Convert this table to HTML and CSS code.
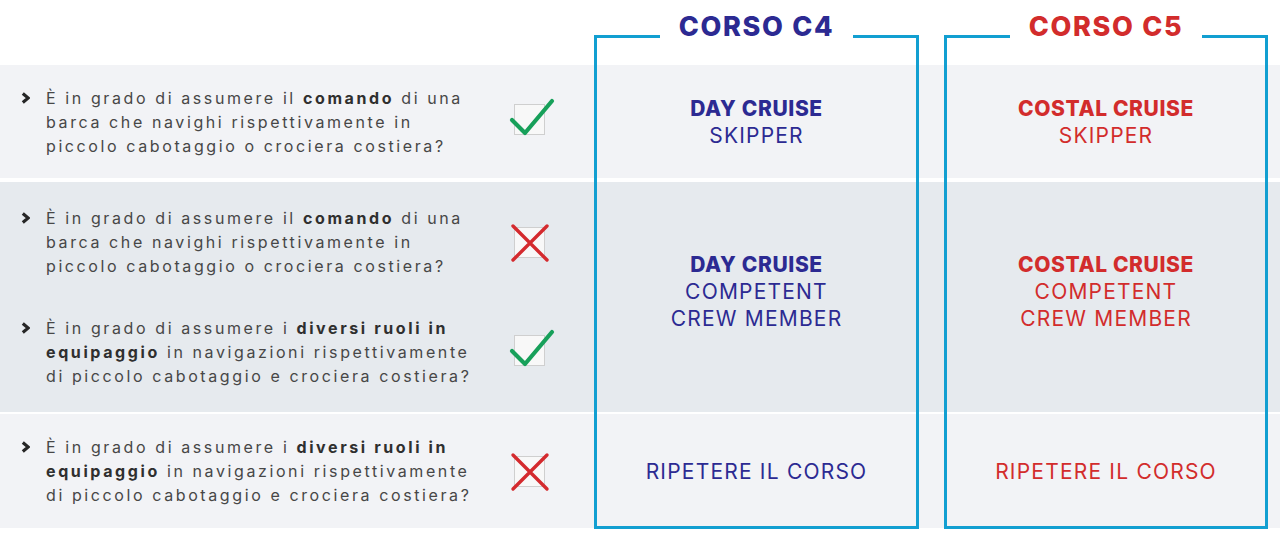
FILE: index.html
```html
<!DOCTYPE html>
<html lang="it">
<head>
<meta charset="utf-8">
<title>Corso C4 / C5</title>
<link rel="stylesheet" href="styles.css">
</head>
<body>
<div class="table">
  <div class="bg bg-r1"></div>
  <div class="bg bg-r2"></div>
  <div class="bg bg-r3"></div>

  <div class="box box-c4">
    <div class="box-head"><span class="seg"></span><h2 class="title navy">CORSO C4</h2><span class="seg"></span></div>
  </div>
  <div class="box box-c5">
    <div class="box-head"><span class="seg"></span><h2 class="title red">CORSO C5</h2><span class="seg"></span></div>
  </div>

  <div class="qcell r1">
    <div class="q">
      <svg class="arrow" viewBox="0 0 9 12" width="9" height="12"><path d="M1.8 1.5 L7.2 6 L1.8 10.5" fill="none" stroke="#262626" stroke-width="3.2"/></svg>
      <p class="qtext">È in grado di assumere il <b>comando</b> di una<br>barca che navighi rispettivamente in<br>piccolo cabotaggio o crociera costiera?</p>
      <span class="mark"><span class="cbox"></span><svg class="sym" viewBox="0 0 46 46" width="46" height="46"><path d="M3 24 L16 37 L43 5" fill="none" stroke="#17a05a" stroke-width="4.2" stroke-linecap="round" stroke-linejoin="round"/></svg></span>
    </div>
  </div>

  <div class="qcell r2">
    <div class="q">
      <svg class="arrow" viewBox="0 0 9 12" width="9" height="12"><path d="M1.8 1.5 L7.2 6 L1.8 10.5" fill="none" stroke="#262626" stroke-width="3.2"/></svg>
      <p class="qtext">È in grado di assumere il <b>comando</b> di una<br>barca che navighi rispettivamente in<br>piccolo cabotaggio o crociera costiera?</p>
      <span class="mark"><span class="cbox"></span><svg class="sym" viewBox="0 0 44 44" width="44" height="44"><path d="M5 5 L39 39 M39 5 L5 39" fill="none" stroke="#d42a2e" stroke-width="3.4" stroke-linecap="round"/></svg></span>
    </div>
    <div class="q">
      <svg class="arrow" viewBox="0 0 9 12" width="9" height="12"><path d="M1.8 1.5 L7.2 6 L1.8 10.5" fill="none" stroke="#262626" stroke-width="3.2"/></svg>
      <p class="qtext">È in grado di assumere i <b>diversi ruoli in</b><br><b>equipaggio</b> in navigazioni rispettivamente<br>di piccolo cabotaggio e crociera costiera?</p>
      <span class="mark"><span class="cbox"></span><svg class="sym" viewBox="0 0 46 46" width="46" height="46"><path d="M3 24 L16 37 L43 5" fill="none" stroke="#17a05a" stroke-width="4.2" stroke-linecap="round" stroke-linejoin="round"/></svg></span>
    </div>
  </div>

  <div class="qcell r3">
    <div class="q">
      <svg class="arrow" viewBox="0 0 9 12" width="9" height="12"><path d="M1.8 1.5 L7.2 6 L1.8 10.5" fill="none" stroke="#262626" stroke-width="3.2"/></svg>
      <p class="qtext">È in grado di assumere i <b>diversi ruoli in</b><br><b>equipaggio</b> in navigazioni rispettivamente<br>di piccolo cabotaggio e crociera costiera?</p>
      <span class="mark"><span class="cbox"></span><svg class="sym" viewBox="0 0 44 44" width="44" height="44"><path d="M5 5 L39 39 M39 5 L5 39" fill="none" stroke="#d42a2e" stroke-width="3.4" stroke-linecap="round"/></svg></span>
    </div>
  </div>

  <div class="ans c4 r1 navy"><b>DAY CRUISE</b><span>SKIPPER</span></div>
  <div class="ans c5 r1 red"><b>COSTAL CRUISE</b><span>SKIPPER</span></div>
  <div class="ans c4 r2 navy lift"><b>DAY CRUISE</b><span>COMPETENT</span><span>CREW MEMBER</span></div>
  <div class="ans c5 r2 red lift"><b>COSTAL CRUISE</b><span>COMPETENT</span><span>CREW MEMBER</span></div>
  <div class="ans c4 r3 navy"><span>RIPETERE IL CORSO</span></div>
  <div class="ans c5 r3 red"><span>RIPETERE IL CORSO</span></div>
</div>
</body>
</html>
```

FILE: styles.css
```css
* { box-sizing: border-box; }

html, body {
  margin: 0;
  padding: 0;
  background: #ffffff;
}

body {
  font-family: Inter, "Noto Sans", "Liberation Sans", sans-serif;
  width: 1280px;
  height: 545px;
  overflow: hidden;
}

.table {
  display: grid;
  grid-template-columns: 594px 325px 25px 324px 12px;
  grid-template-rows: 65px 113px 4px 230px 2px 114px 16px;
}

.bg { grid-column: 1 / -1; }
.bg-r1 { grid-row: 2; background: #f2f3f6; }
.bg-r2 { grid-row: 4; background: #e6eaee; }
.bg-r3 { grid-row: 6; background: #f2f3f6; }

.r1 { grid-row: 2; }
.r2 { grid-row: 4; }
.r3 { grid-row: 6; }
.c4 { grid-column: 2; }
.c5 { grid-column: 4; }

.navy { color: #2c2a92; }
.red { color: #d22c2c; }

/* boxes */
.box {
  grid-row: 1 / 7;
  margin-top: 35px;
  margin-bottom: -1px;
  border: 3px solid #129fd1;
  border-top: 0;
  z-index: 2;
  pointer-events: none;
}
.box-c4 { grid-column: 2; }
.box-c5 { grid-column: 4; }

.box-head {
  display: flex;
  align-items: flex-start;
  height: 3px;
  margin: 0 -3px;
}
.seg {
  flex: 1;
  border-top: 3px solid #129fd1;
}
.title {
  flex: none;
  margin: -23px 0 0;
  padding: 0 19px;
  height: 30px;
  line-height: 30px;
  font-size: 27px;
  font-weight: 800;
  letter-spacing: 1.7px;
}

/* questions */
.qcell {
  grid-column: 1;
  display: flex;
  flex-direction: column;
  justify-content: center;
  gap: 38px;
  padding-left: 21px;
}
.q {
  display: flex;
  align-items: flex-start;
}
.arrow {
  flex: none;
  margin-top: 6px;
  margin-right: 16px;
}
.qtext {
  margin: 0;
  width: 468px;
  font-size: 16px;
  line-height: 24px;
  letter-spacing: 2.6px;
  color: #474747;
}
.qtext b {
  color: #2f2f2f;
  font-weight: 700;
}

.mark {
  position: relative;
  flex: none;
  width: 31px;
  height: 31px;
  align-self: center;
  margin-top: -4px;
}
.cbox {
  display: block;
  width: 31px;
  height: 31px;
  border: 1.5px solid #cfcfcf;
  background: #f8f8f8;
}
.sym {
  position: absolute;
  left: -5px;
  top: -8px;
}
.r2 .q:first-child .mark .sym,
.r3 .mark .sym {
  left: -6px;
  top: -6px;
}
.r2 .q:first-child .mark,
.r3 .mark {
  margin-top: 0;
}

/* answers */
.ans {
  display: flex;
  flex-direction: column;
  align-items: center;
  justify-content: center;
  font-size: 21px;
  line-height: 27px;
  z-index: 1;
}
.ans b { font-weight: 800; letter-spacing: 0.6px; }
.ans span { font-weight: 400; letter-spacing: 1.2px; }
.ans.lift { padding-bottom: 12px; }
```
